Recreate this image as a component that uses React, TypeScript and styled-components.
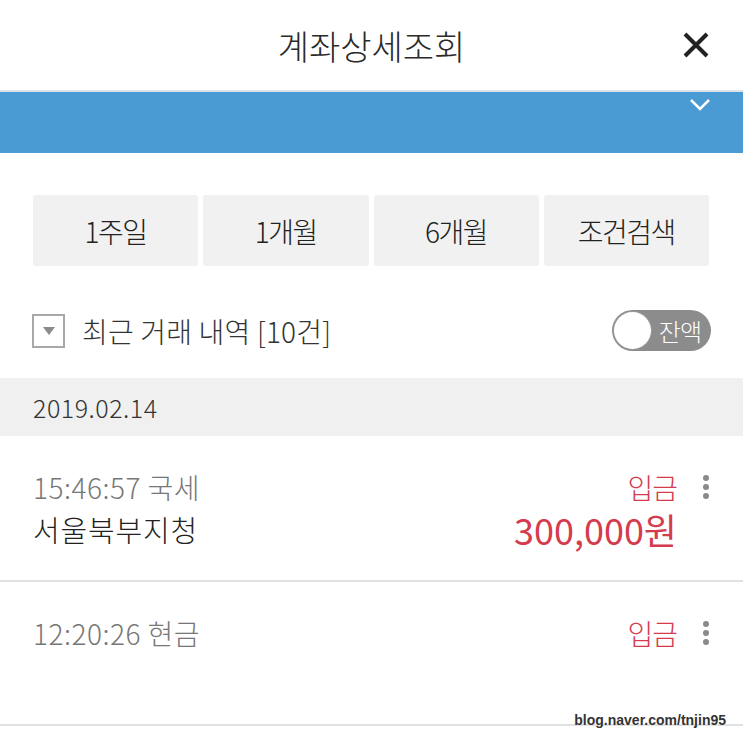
import React from 'react'
import styled, { createGlobalStyle } from 'styled-components'

const GlobalStyle = createGlobalStyle`
  html, body {
    margin: 0;
    padding: 0;
    background: #fff;
  }

  body {
    font-family: 'Noto Sans CJK KR', 'Noto Sans', sans-serif;
    font-weight: 300;
    color: #222;
  }
`

const Page = styled.div`
  position: relative;
  width: 743px;
  height: 743px;
  overflow: hidden;
  background: #fff;
`

const Header = styled.header`
  height: 92px;
  display: grid;
  grid-template-columns: 1fr auto 1fr;
  align-items: center;
  padding: 0 32px;
  box-sizing: border-box;
  border-bottom: 2px solid #dbe4ec;
`

const Title = styled.h1`
  grid-column: 2;
  margin: 0;
  font-size: 34px;
  font-weight: 300;
  letter-spacing: 0;
  color: #2a2a2a;
`

const CloseButton = styled.button`
  justify-self: end;
  width: 30px;
  height: 30px;
  padding: 0;
  border: 0;
  background: none;
  display: flex;
  align-items: center;
  justify-content: center;
`

const AccountBar = styled.div`
  height: 61px;
  background: #4a9ad4;
  display: flex;
  justify-content: flex-end;
  align-items: flex-start;
  padding: 6px 32px 0;
  box-sizing: border-box;
`

const Periods = styled.div`
  display: grid;
  grid-template-columns: repeat(4, 1fr);
  gap: 5px;
  padding: 42px 34px 0 33px;
`

const PeriodButton = styled.button`
  height: 71px;
  border: 0;
  border-radius: 3px;
  background: #f1f1f1;
  font-family: inherit;
  font-size: 28px;
  font-weight: 300;
  letter-spacing: -1.5px;
  color: #222;
`

const ListHeader = styled.div`
  display: flex;
  align-items: center;
  justify-content: space-between;
  height: 41px;
  margin: 44px 32px 27px;
`

const ListTitle = styled.div`
  display: flex;
  align-items: center;
  gap: 17px;
  font-size: 28px;
  letter-spacing: 0.2px;
  color: #333;
`

const Checkbox = styled.span`
  width: 33px;
  height: 34px;
  box-sizing: border-box;
  border: 2px solid #a8a8a8;
  display: flex;
  align-items: center;
  justify-content: center;
`

const Toggle = styled.div`
  width: 99px;
  height: 41px;
  border-radius: 21px;
  background: #8c8c8c;
  display: flex;
  align-items: center;
  box-sizing: border-box;
  padding: 0 10px 0 2px;
  justify-content: space-between;
`

const Knob = styled.span`
  width: 37px;
  height: 37px;
  border-radius: 50%;
  background: #fff;
  box-shadow: 0 0 0 1px #9a9a9a;
`

const ToggleLabel = styled.span`
  font-size: 24px;
  letter-spacing: -1px;
  color: #fff;
`

const DateBar = styled.div`
  height: 58px;
  background: #f0f0f0;
  display: flex;
  align-items: center;
  padding-left: 33px;
  font-size: 25px;
  letter-spacing: 0.5px;
  color: #333;
`

const Item = styled.div<{ $height: number }>`
  height: ${p => p.$height}px;
  box-sizing: border-box;
  border-bottom: 2px solid #e2e2e2;
  display: flex;
  padding: 30px 32px 0 33px;
`

const ItemBody = styled.div`
  flex: 1;
  display: grid;
  grid-template-columns: 1fr auto;
  grid-auto-rows: 42px;
  align-items: center;
  line-height: 42px;
`

const Time = styled.span`
  font-size: 28px;
  letter-spacing: 0.5px;
  color: #777;
`

const Kind = styled.span`
  justify-self: end;
  font-size: 28px;
  letter-spacing: -1px;
  color: #d53b4e;
`

const Place = styled.span`
  font-size: 29px;
  letter-spacing: 0.8px;
  color: #222;
`

const Amount = styled.span`
  justify-self: end;
  font-size: 36px;
  font-weight: 400;
  letter-spacing: 0;
  color: #d53b4e;
`

const Kebab = styled.div`
  width: 8px;
  margin: 9px 0 0 26px;
  display: flex;
  flex-direction: column;
  gap: 3px;
  align-self: flex-start;

  span {
    width: 6px;
    height: 6px;
    border-radius: 50%;
    background: #8a8a8a;
  }
`

const Watermark = styled.span`
  position: absolute;
  right: 17px;
  top: 712px;
  font-family: 'Liberation Sans', Arial, sans-serif;
  font-size: 14px;
  font-weight: 700;
  color: #333;
`

const transactions = [
  { time: '15:46:57 국세', place: '서울북부지청', kind: '입금', amount: '300,000원', height: 146 },
  { time: '12:20:26 현금', place: '', kind: '입금', amount: '', height: 144 },
]

export default function App() {
  return (
    <Page>
      <GlobalStyle />
      <Header>
        <Title>계좌상세조회</Title>
        <CloseButton aria-label="닫기">
          <svg width="28" height="28" viewBox="0 0 28 28">
            <path d="M3 3 L25 25 M25 3 L3 25" stroke="#222" strokeWidth="4" />
          </svg>
        </CloseButton>
      </Header>

      <AccountBar>
        <svg width="22" height="14" viewBox="0 0 22 14">
          <path d="M2 2 L11 11 L20 2" fill="none" stroke="#fff" strokeWidth="2.5" />
        </svg>
      </AccountBar>

      <Periods>
        <PeriodButton>1주일</PeriodButton>
        <PeriodButton>1개월</PeriodButton>
        <PeriodButton>6개월</PeriodButton>
        <PeriodButton>조건검색</PeriodButton>
      </Periods>

      <ListHeader>
        <ListTitle>
          <Checkbox>
            <svg width="12" height="8" viewBox="0 0 12 8">
              <path d="M0 0 H12 L6 8 Z" fill="#8a8a8a" />
            </svg>
          </Checkbox>
          최근 거래 내역 [10건]
        </ListTitle>
        <Toggle>
          <Knob />
          <ToggleLabel>잔액</ToggleLabel>
        </Toggle>
      </ListHeader>

      <DateBar>2019.02.14</DateBar>

      {transactions.map(t => (
        <Item key={t.time} $height={t.height}>
          <ItemBody>
            <Time>{t.time}</Time>
            <Kind>{t.kind}</Kind>
            <Place>{t.place}</Place>
            <Amount>{t.amount}</Amount>
          </ItemBody>
          <Kebab>
            <span />
            <span />
            <span />
          </Kebab>
        </Item>
      ))}

      <Watermark>blog.naver.com/tnjin95</Watermark>
    </Page>
  )
}
